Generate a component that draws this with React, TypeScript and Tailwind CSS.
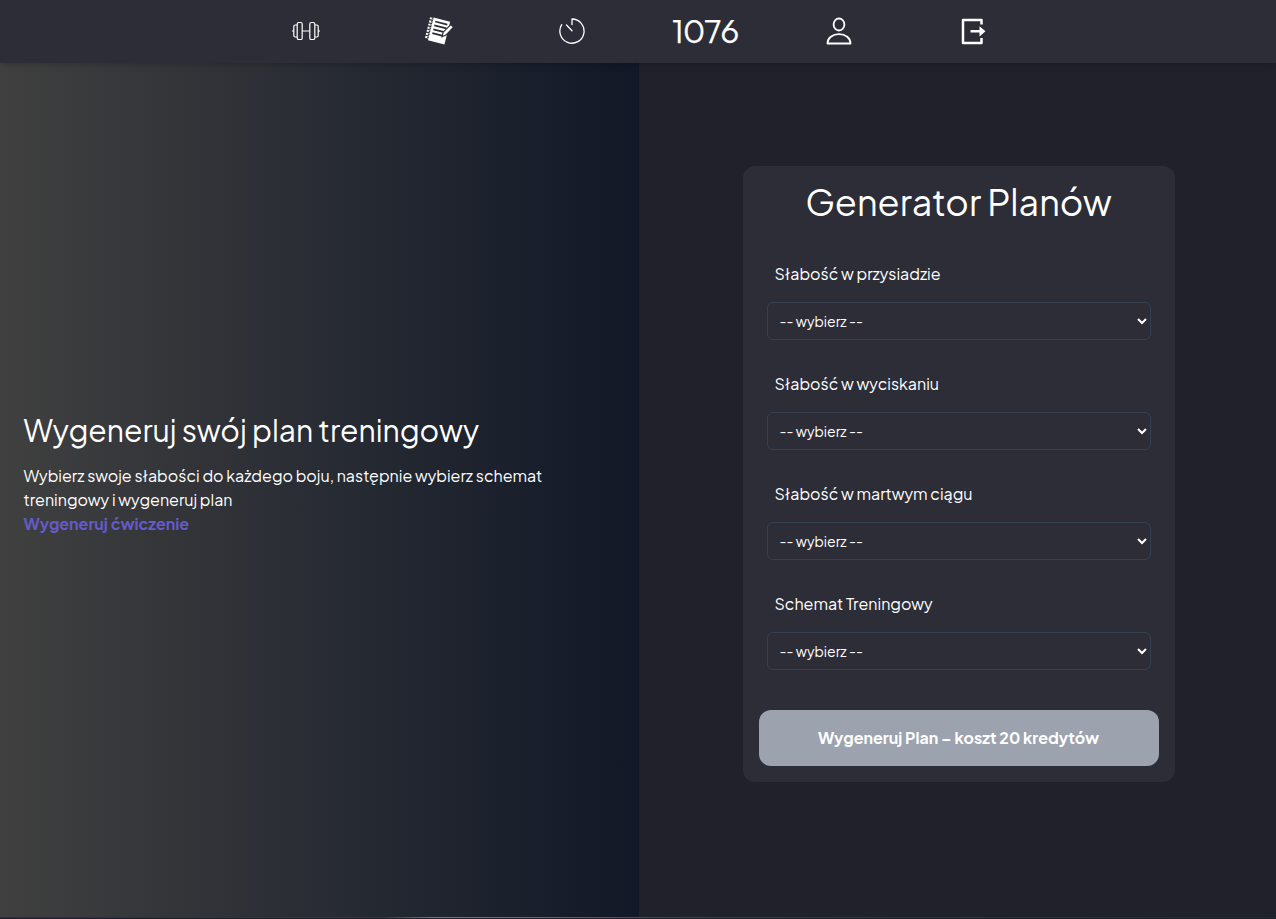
const labels = ['Słabość w przysiadzie', 'Słabość w wyciskaniu', 'Słabość w martwym ciągu', 'Schemat Treningowy'];

function Dumbbell() {
  return (
    <svg width="30" height="24" viewBox="0 0 30 24" fill="none" stroke="white" strokeWidth="1.2">
      <rect x="6.2" y="3.500" width="5" height="17" rx="1.600" />
      <rect x="18.800" y="3.500" width="5" height="17" rx="1.600" />
      <path d="M6 6H4.200Q2.800 6 2.800 7.500V16.500Q2.800 18 4.200 18H6M24 6h1.800Q27.200 6 27.200 7.500V16.500Q27.200 18 25.800 18H24M1 12h2M27 12h2M11.200 12h7.600" />
    </svg>
  );
}

function Notebook() {
  return (
    <svg width="30" height="30" viewBox="0 0 30 30">
      <g transform="rotate(14 14 15)">
        <rect x="6.500" y="3" width="17" height="23.500" fill="white" />
        <path d="M3 4.500h4M3 7.700h4M3 10.900h4M3 14.100h4M3 17.300h4M3 20.500h4M3 23.700h4" stroke="white" strokeWidth="2" />
        <path d="M5 4.500h1.600M5 7.700h1.600M5 10.900h1.600M5 14.100h1.600M5 17.300h1.600M5 20.500h1.600M5 23.700h1.600" stroke="#2d2d37" strokeWidth="1.200" />
        <path d="M9 6.500h12.500M9 10.500h12.500M9 14.500h12.500M9 18.500h10" stroke="#2d2d37" strokeWidth="1.700" />
      </g>
      <path d="M18 20.800l1.200-4.600L26.800 8.500l2.700 2.600-7.500 8z" fill="white" stroke="#2d2d37" strokeWidth="1.200" />
    </svg>
  );
}

function Timer() {
  return (
    <svg width="28" height="28" viewBox="0 0 28 28" fill="none" stroke="white" strokeWidth="1.300" strokeLinecap="round" strokeLinejoin="round">
      <path d="M14 7.500V2a12.100 12.100 0 1 1-10.300 5.700M8.500 8l5.500 5.700" />
    </svg>
  );
}

function User() {
  return (
    <svg width="28" height="28" viewBox="0 0 28 28" fill="none" stroke="white" strokeWidth="1.800" strokeLinejoin="round">
      <ellipse cx="14" cy="7.500" rx="5.400" ry="6" />
      <path d="M2.500 26.500c0-5.500 5-9.300 11.500-9.300s11.500 3.800 11.500 9.300z" />
    </svg>
  );
}

function Exit() {
  return (
    <svg width="26" height="28" viewBox="0 0 26 28" fill="none" stroke="white" strokeWidth="2.500" strokeLinejoin="round">
      <path d="M20.500 7.500V3H2v23h18.500v-5M9.500 14.300h10" />
      <path d="M18.500 9.200v10.200l6-5.100z" fill="white" stroke="none" />
    </svg>
  );
}

export default function App() {
  return (
    <div className="flex h-[919px] flex-col overflow-hidden bg-[#21212c] font-['Plus_Jakarta_Sans','Outfit','Inter',sans-serif] text-white">
      <nav className="z-10 flex h-[63px] shrink-0 justify-center bg-[#2d2d37] pb-[2px] pl-[2px] shadow-md">
        <div className="grid w-[800px] grid-cols-6 place-items-center">
          <a><Dumbbell /></a>
          <a><Notebook /></a>
          <a><Timer /></a>
          <a className="pt-px font-['Outfit','Plus_Jakarta_Sans',sans-serif] text-[33px] leading-[48px] font-light tracking-[0.3px] [-webkit-text-stroke:0.25px_white]">1076</a>
          <a><User /></a>
          <a className="pl-1"><Exit /></a>
        </div>
      </nav>
      <main className="flex h-[854px] shrink-0">
        <section className="flex w-[639px] shrink-0 flex-col justify-center bg-linear-[90deg,#404040,#111827] px-[23.5px] pb-8">
          <h1 className="whitespace-nowrap text-[30px] leading-9">Wygeneruj swój plan treningowy</h1>
          <p className="mt-4 whitespace-nowrap text-base leading-6">
            Wybierz swoje słabości do każdego boju, następnie wybierz schemat<br />treningowy i wygeneruj plan
          </p>
          <a className="text-base leading-6 font-bold text-[#645bc9]">Wygeneruj ćwiczenie</a>
        </section>
        <section className="flex grow justify-center pt-[103px] pl-[3px]">
          <form className="flex h-[616px] w-[432px] flex-col rounded-xl bg-[#2d2d37] p-4">
            <h2 className="mb-[23px] pr-px text-center text-4xl leading-10">Generator Planów</h2>
            {labels.map((label) => (
              <div key={label} className="flex h-[110px] flex-col px-2 pt-[17px]">
                <label className="px-[7.5px] text-base leading-6">{label}</label>
                <div className="mt-4 flex h-[38px] shrink-0 items-center justify-between rounded-md border border-[#364150] pr-[3px] pl-[11.5px] text-sm">
                  <span>-- wybierz --</span>
                  <svg width="10" height="8" viewBox="0 0 10 8" fill="none" stroke="white" strokeWidth="2"><path d="M1 2l4 4 4-4" /></svg>
                </div>
              </div>
            ))}
            <button type="button" className="mt-auto h-14 rounded-xl bg-[#9ca3af] pr-px text-base font-bold">Wygeneruj Plan – koszt 20 kredytów</button>
          </form>
        </section>
      </main>
      <div className="h-px bg-linear-[90deg,#302f35_0%,#34383c_30%,#7d7668_34%,#6b665a_43%,#454247_52%,#38363f_62%,#28262f_100%]" />
      <div className="h-px bg-[#21202a]" />
    </div>
  );
}
